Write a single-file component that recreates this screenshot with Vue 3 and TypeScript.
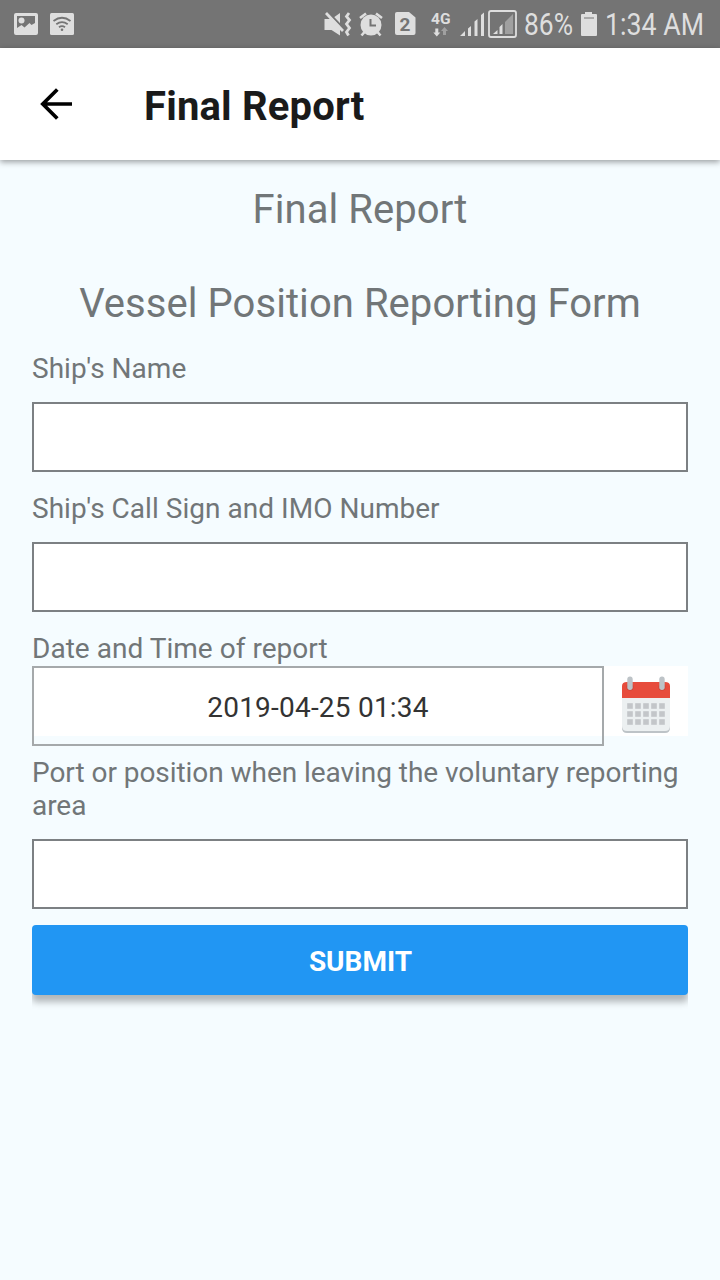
<script setup lang="ts">
import { ref } from 'vue'

const shipName = ref('')
const callSign = ref('')
const port = ref('')
const reportTime = ref('2019-04-25 01:34')
const columns: number[] = [0, 1, 2, 3, 4]
const rows: number[] = [0, 1, 2]
</script>

<template>
  <div class="screen">
    <div class="status">
      <svg class="left-icons" width="100" height="48" viewBox="0 0 100 48">
        <path fill="#dedede" fill-rule="evenodd" d="M16 13h20q2 0 2 2v18q0 2-2 2H16q-2 0-2-2V15q0-2 2-2zM17 16v12l4.500-3 3 2.500 5-4.500 2 2 3.500-2v-7z" />
        <circle cx="21.500" cy="20.500" r="3" fill="#dedede" />
        <rect x="50" y="13" width="24" height="22" rx="1.500" fill="#dedede" />
        <g fill="none" stroke="#747474" stroke-width="1.800">
          <path d="M53.500 21q8.500-6.500 17 0M56.300 24.200q5.700-4.300 11.400 0M59 27.300q3-2.200 6 0" />
        </g>
        <circle cx="62" cy="29.800" r="1.300" fill="#747474" />
      </svg>
      <svg class="right-icons" width="203" height="48" viewBox="317 0 203 48">
        <g fill="#dedede">
          <path d="M324.500 19h7l8.500-6v22.500l-8.500-5.500h-7z" />
          <path d="M327.500 11.500l17 18" stroke="#747474" stroke-width="2.200" />
          <path d="M326 13l17 18" stroke="#dedede" stroke-width="2.800" />
          <path d="M349 13l-2.500 3.500 3 3.500-3 4 3 4-3 4 2 3.500" fill="none" stroke="#dedede" stroke-width="2.800" />
          <circle cx="371" cy="25" r="10.500" />
          <path d="M360 18l6-4.500M376 13.500l6 4.500M364.500 32l-3 3.500M377.500 32l3 3.500" fill="none" stroke="#dedede" stroke-width="2.600" />
          <path d="M370.500 19v6.500h5.500" fill="none" stroke="#747474" stroke-width="2" />
          <path d="M397 12h12l6.500 5.500V33q0 2-2 2H397q-2 0-2-2V14q0-2 2-2z" />
          <path d="M435.300 28.500h3v4h2l-3.500 4-3.500-4h2z" />
          <path d="M443 35v-4h-2l3.500-4 3.500 4h-2v4z" fill="#a0a0a0" />
          <path d="M460 36l5-5v5zM468 28.500l3-2.500v10h-3zM474.500 21.500l3-2.500v17h-3zM481 15l3-2.500V36h-3z" />
        </g>
        <text x="405" y="31" class="sim">2</text>
        <text x="431" y="24" class="network" textLength="19.500" lengthAdjust="spacingAndGlyphs">4G</text>
        <rect x="489" y="11" width="27" height="26" rx="2" fill="none" stroke="#dedede" stroke-width="1.800" />
        <path d="M493 34l4.500-4v4zM499.500 27l3-3v10h-3z" fill="#dedede" />
        <path d="M505 22l8-8v20h-8z" fill="#a0a0a0" />
      </svg>
      <svg class="readout" width="200" height="48" viewBox="520 0 200 48">
        <text x="524" y="35" textLength="49" lengthAdjust="spacingAndGlyphs">86%</text>
        <path d="M585 12h7v2h4q1 0 1 1v20q0 1-1 1h-14q-1 0-1-1V15q0-1 1-1h3z" fill="#dedede" />
        <path d="M584 18h10" stroke="#747474" />
        <text x="605" y="35" textLength="99" lengthAdjust="spacingAndGlyphs">1:34 AM</text>
      </svg>
    </div>

    <header class="bar">
      <svg width="32" height="32" viewBox="0 0 32 32" fill="none" stroke="#000" stroke-width="3.700">
        <path d="M17.300 1.500L2.800 16l14.500 14.500M2 16h30" />
      </svg>
      <h1>Final Report</h1>
    </header>

    <main>
      <h2>Final Report</h2>
      <h2 class="form-title">Vessel Position Reporting Form</h2>

      <label for="ship">Ship's Name</label>
      <input id="ship" v-model="shipName" type="text" />
      <label for="call">Ship's Call Sign and IMO Number</label>
      <input id="call" v-model="callSign" type="text" />

      <div class="label">Date and Time of report</div>
      <div class="date-row">
        <div class="date">{{ reportTime }}</div>
        <div class="picker">
          <svg width="84" height="70" viewBox="604 666 84 70">
            <path d="M622 693h48v35q0 5-5 5h-38q-5 0-5-5z" fill="#bdc3c7" />
            <path d="M622 693h48v33q0 5-5 5h-38q-5 0-5-5z" fill="#ecf0f1" />
            <path d="M622 698v-12q0-4 5-4h38q5 0 5 4v12z" fill="#e74c3c" />
            <circle cx="630" cy="687" r="3.500" fill="#c94336" />
            <circle cx="662" cy="687" r="3.500" fill="#c94336" />
            <rect x="627.300" y="676.500" width="5.400" height="13.500" rx="2.700" fill="#bdc3c7" />
            <rect x="659.300" y="676.500" width="5.400" height="13.500" rx="2.700" fill="#bdc3c7" />
            <template v-for="r in rows" :key="r">
              <rect v-for="c in columns" :key="c" :x="627.2 + c * 8" :y="703.2 + r * 8" width="5.600" height="5.600" fill="#c3c6c9" />
            </template>
          </svg>
        </div>
      </div>

      <label class="port-label" for="port">Port or position when leaving the voluntary reporting area</label>
      <input id="port" v-model="port" type="text" />
      <div class="submit-wrap">
        <button type="button">SUBMIT</button>
      </div>
    </main>
  </div>
</template>

<style>
body {
  margin: 0;
}
</style>

<style scoped>
.screen {
  width: 720px;
  height: 1280px;
  overflow: hidden;
  display: flex;
  flex-direction: column;
  background: #f5fcff;
  font-family: Roboto, "Liberation Sans", sans-serif;
}
.status {
  height: 48px;
  flex: none;
  display: flex;
  background: #747474;
}
.right-icons {
  margin-left: auto;
}
.sim {
  font-size: 19px;
  font-weight: 700;
  fill: #747474;
  text-anchor: middle;
}
.network {
  font-size: 15px;
  font-weight: 700;
  fill: #dedede;
}
.readout text {
  font-size: 31px;
  fill: #dedede;
}
.bar {
  height: 112px;
  flex: none;
  box-sizing: border-box;
  padding: 4px 40px 0;
  display: flex;
  align-items: center;
  gap: 72px;
  background: #fff;
  box-shadow: 0 2px 6px rgba(0, 0, 0, 0.38);
}
.bar svg {
  margin-bottom: 4px;
}
h1 {
  margin: 0;
  font-size: 40px;
  line-height: 47px;
  font-weight: 700;
  letter-spacing: 0.18px;
  color: #1a1a1a;
}
main {
  padding: 26px 32px 0;
  display: flex;
  flex-direction: column;
}
h2 {
  margin: 0;
  font-size: 40px;
  line-height: 47px;
  font-weight: 400;
  letter-spacing: 0.06px;
  text-align: center;
  color: #717678;
}
.form-title {
  margin: 47px 0 25px;
}
label,
.label {
  font-size: 28px;
  line-height: 33px;
  letter-spacing: 0.03px;
  color: #717678;
}
input {
  box-sizing: border-box;
  width: 100%;
  height: 70px;
  margin: 17px 0 20px;
  padding: 0 16px;
  border: 2px solid #7c8083;
  border-radius: 0;
  background: #fff;
  font: 28px Roboto, sans-serif;
  outline: none;
}
.label {
  margin-bottom: 1px;
}
.date-row {
  display: flex;
  height: 80px;
}
.date {
  box-sizing: border-box;
  width: 572px;
  height: 80px;
  padding-top: 3px;
  border: 2px solid #a5a9ab;
  background: linear-gradient(#fff 68px, #f5fcff 68px);
  display: flex;
  align-items: center;
  justify-content: center;
  font-size: 28px;
  letter-spacing: 0.22px;
  color: #333;
}
.picker {
  width: 84px;
  height: 70px;
  background: #fff;
}
.port-label {
  margin-top: 10px;
  letter-spacing: -0.05px;
}
#port {
  margin-bottom: 16px;
}
.submit-wrap {
  height: 90px;
  overflow: hidden;
}
button {
  display: block;
  width: 100%;
  height: 70px;
  border: 0;
  border-radius: 4px;
  padding: 3px 0 0 1px;
  background: #2196f3;
  box-shadow: 0 7px 7px rgba(0, 0, 0, 0.28);
  color: #fff;
  font: 700 28px Roboto, sans-serif;
}
</style>
